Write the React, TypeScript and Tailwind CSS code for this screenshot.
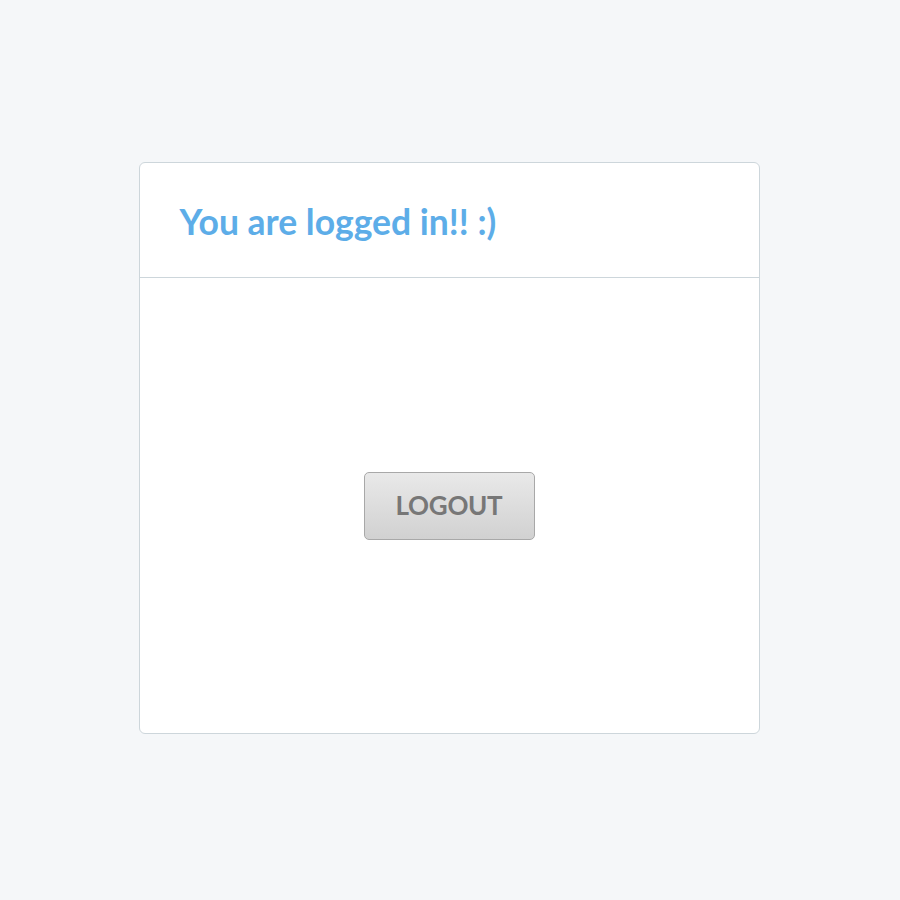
export default function App() {
  return (
    <div className="min-h-screen w-full bg-[#f5f7f9] flex justify-center pt-[162px] pr-[2px]" style={{ fontFamily: "Lato, 'Open Sans', sans-serif" }}>
      <div className="w-[621px] h-[572px] bg-white border border-[#cdd6db] rounded-[6px] flex flex-col">
        <div className="h-[115px] border-b border-[#cdd6db] flex items-center pl-[40px] pt-[4px]">
          <h1 className="text-[35.5px] font-bold text-[#5dade8] leading-none" style={{ fontFamily: "Lato, sans-serif" }}>You are logged in!! :)</h1>
        </div>
        <div className="flex-1 flex items-center justify-center">
          <button className="w-[171px] h-[68px] rounded-[5px] border border-[#a8a8a8] bg-gradient-to-b from-[#e9e9e9] to-[#d1d1d1] text-[#777777] text-[26px] font-bold tracking-[-0.3px]" style={{ fontFamily: "Lato, sans-serif" }}>
            LOGOUT
          </button>
        </div>
      </div>
    </div>
  );
}
